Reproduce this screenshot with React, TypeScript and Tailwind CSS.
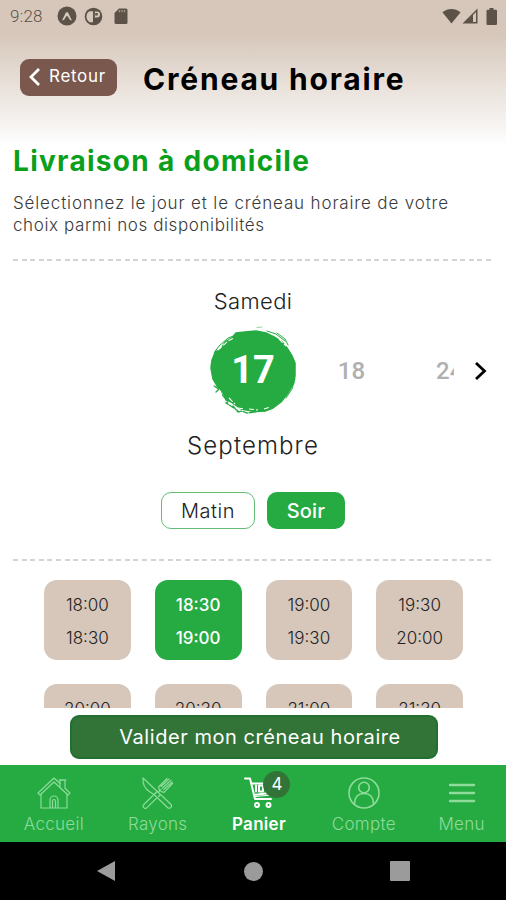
import type { ReactNode } from "react";

const slots = [
  ["18:00", "18:30"],
  ["18:30", "19:00"],
  ["19:00", "19:30"],
  ["19:30", "20:00"],
  ["20:00", "20:30"],
  ["20:30", "21:00"],
  ["21:00", "21:30"],
  ["21:30", "22:00"],
];

const StatusBar = () => (
  <div className="h-8 flex items-center justify-between pl-[10px] pr-2 text-[#5c5247]">
    <div className="flex items-center">
      <span className="w-[47px] text-[17px] leading-8 font-light tracking-[0.200px] font-['Roboto']">9:28</span>
      <svg width="20" height="20" viewBox="0 0 20 20">
        <circle cx="10" cy="10" r="9.5" fill="currentColor" />
        <path d="M5 14.2C7.200 11 8.300 6 10 6s2.800 5 5 8.200c-1.300.5-2.200-.2-3-1.700-.8-1.600-1.200-2.600-2-2.600s-1.200 1-2 2.600c-.8 1.500-1.700 2.200-3 1.700Z" fill="#d6c7ba" />
      </svg>
      <svg className="ml-[7px]" width="19" height="19" viewBox="0 0 19 19">
        <circle cx="9.500" cy="9.500" r="8.800" fill="currentColor" />
        <path d="M5.500 4.200h3.500v11H5.500a6.500 6.500 0 0 1 0-11Z" fill="#d6c7ba" />
        <path d="M10.800 4.500H13a3 3 0 0 1 0 6h-2.200Z" fill="#d6c7ba" />
        <rect x="11.200" y="6" width="2.500" height="2.500" fill="currentColor" />
      </svg>
      <svg className="ml-[10px]" width="16" height="18" viewBox="0 0 16 18">
        <path d="M6 1.500h7a1.500 1.500 0 0 1 1.500 1.500v12.500a1.500 1.500 0 0 1-1.500 1.500H3A1.500 1.500 0 0 1 1.500 15.500V6Z" fill="currentColor" />
        <path d="M6.500 3v2.200M9 3v2.200M11.500 3v2.200" stroke="#a2958a" strokeWidth="1.300" />
      </svg>
    </div>
    <div className="flex items-center">
      <svg width="19" height="16" viewBox="0 0 19 16">
        <path d="M9.500 15.500.4 4.300C5.500-.2 13.500-.2 18.600 4.300Z" fill="currentColor" />
      </svg>
      <svg className="ml-[1px]" width="17" height="16" viewBox="0 0 17 16">
        <path d="M.5 15.500 15.500.5v15Z" fill="currentColor" />
        <path d="M11 7v7h3V4Z" fill="#d6c7ba" />
      </svg>
      <svg className="ml-[7px]" width="12" height="17" viewBox="0 0 12 17">
        <path d="M3.500 0h4v1.800H10a1 1 0 0 1 1 1V16a1 1 0 0 1-1 1H1.500a1 1 0 0 1-1-1V2.800a1 1 0 0 1 1-1h2Z" fill="currentColor" />
      </svg>
    </div>
  </div>
);

const Divider = () => (
  <div className="mx-[13px] h-[2px] shrink-0 w-[478px] bg-[repeating-linear-gradient(90deg,#d6d4d2_0,#d6d4d2_5px,transparent_5px,transparent_8.600px)]" />
);

const BrushCircle = () => (
  <svg className="absolute left-0 -top-[2px]" width="88" height="90" viewBox="0 0 88 90">
    <path
      d="M2 42 3 34 7 26 12 23 16 16 23 12 27 7 36 6 47 5 57 7 65 11 73 16 78 22 83 30 86 37 86 50 84 58 79 67 72 76 64 82 56 85 43 85 32 83 25 78 17 74 14 66 8 60 4 53Z"
      fill="#25ab41"
      stroke="#25ab41"
      strokeWidth="1.500"
      strokeLinejoin="round"
    />
    <g fill="none" stroke="#25ab41" strokeLinecap="round">
      <path d="M58 5l9 3 9 7M68 7l8 6 3 6M5 27l5-7 9-8 8-3M4 31l3-7" strokeWidth="1" />
      <path d="M48 1.500l5-.5" strokeWidth="0.500" />
      <path d="M12 62l2 8 5 5M16 72l4 4-3 1 8 5 4 3M24 80l5 6 4-1 5 2 9-1M42 86l13-1 8-3M5 60l5 3-3 3" strokeWidth="1.300" strokeDasharray="5 1.500" />
      <path d="M77 72l6-9 3-10M80 65l5-8" strokeWidth="1" />
    </g>
    <path d="M9 24l10-9 6-3M70 13l7 7M19 76l6 3M20 72l6 6M29 82l6 1M40 83l9 1M55 83l6-2" fill="none" stroke="#fff" strokeWidth="1.100" strokeDasharray="5 2" />
  </svg>
);

const HomeIcon = () => (
  <svg width="34" height="32" viewBox="0 0 34 32" fill="none" stroke="currentColor" strokeWidth="1.200" strokeLinejoin="round">
    <path d="M17 1 1 16l2 2L17 5l14 13 2-2-5-4.700V3h-5v3.500Z" />
    <path d="M4 17v14h26V17M23 6v4M21.500 3h8" />
    <path d="M13 31v-8a4 4 0 0 1 8 0v8M15.500 31v-7a1.500 1.500 0 0 1 3 0v7" />
  </svg>
);

const CutleryIcon = () => (
  <svg width="33" height="32" viewBox="0 0 33 32" fill="none" stroke="currentColor" strokeWidth="1.200" strokeLinejoin="round" strokeLinecap="round">
    <path d="M2 1c-.5 6 2 11 7 14l4 2.500 13.500 13a2.300 2.300 0 0 0 3.300-3.300Z" />
    <path d="m13 17.500 3.500-3.300M17.500 19.500l1.500-1.500" />
    <path d="M12 18.500 2.800 27.500a2.200 2.200 0 0 0 3.200 3.200l9.200-9.200M18.500 13l-1-3L26 1.500M20 14.500l3 .8 8.500-8.800M20 9.500l8-7.500M21.500 11l8.500-7.700M22.800 12.500l8.400-7.500M18 14.500l2-2" />
  </svg>
);

const CartIcon = () => (
  <svg width="29" height="32" viewBox="0 0 29 32" fill="none" stroke="currentColor" strokeWidth="2" strokeLinecap="round" strokeLinejoin="round">
    <path d="M1 1.500h5L11 22h16M7.500 6.500H28l-2.500 9.500L10 18" />
    <path d="M12 8.500v6M15 8.500h4v6h-4ZM22 8.500v6" strokeWidth="2" />
    <path d="M11.500 19.500 27 18" strokeWidth="1" />
    <circle cx="13" cy="28" r="2" />
    <circle cx="24.500" cy="28" r="2" />
  </svg>
);

const AccountIcon = () => (
  <svg width="32" height="32" viewBox="0 0 32 32" fill="none" stroke="currentColor" strokeWidth="1.600">
    <circle cx="16" cy="16" r="15" />
    <circle cx="16" cy="10.500" r="5.300" />
    <path d="M6.500 27c0-6.500 3.500-10.500 9.500-10.500s9.500 4 9.500 10.500" />
  </svg>
);

const MenuIcon = () => (
  <svg width="28" height="32" viewBox="0 0 28 32" stroke="currentColor" strokeWidth="2.400" strokeLinecap="round">
    <path d="M2 8h24M2 16h24M2 24h24" />
  </svg>
);

type TabProps = { icon: ReactNode; label: string; className: string };

const Tab = ({ icon, label, className }: TabProps) => (
  <div className={`flex flex-col items-center pt-[12px] ${className}`}>
    <div className="h-8">{icon}</div>
    <span className="mt-[3px] leading-6 whitespace-nowrap">{label}</span>
  </div>
);

export default function App() {
  return (
    <main className="w-[506px] h-[900px] overflow-hidden flex flex-col bg-white font-['Inter',sans-serif] font-light text-[#222]">
      <header className="h-[145px] shrink-0 bg-[linear-gradient(180deg,#d6c7ba_0px,#d6c7ba_34px,#f7f4f2_125px,#ffffff_145px)]">
        <StatusBar />
        <div className="mt-[23px] ml-5 flex items-center">
          <button className="w-[97px] h-[37px] rounded-[9px] bg-[#7b584d] text-white flex items-center pl-2">
            <svg width="13" height="20" viewBox="0 0 13 20" fill="none" stroke="currentColor" strokeWidth="2.800">
              <path d="M11 2 3 10l8 8" />
            </svg>
            <span className="ml-2 text-[17px] font-normal tracking-[0.700px]">Retour</span>
          </button>
          <h1 className="ml-[26px] mt-1 text-[30px] leading-10 font-bold text-black tracking-[1.800px] whitespace-nowrap">Créneau horaire</h1>
        </div>
      </header>

      <section className="h-[114px] shrink-0 pl-[13px]">
        <h2 className="h-[47px] text-[28px] leading-8 font-bold text-[#0b9f1c] tracking-[1.300px] whitespace-nowrap">Livraison à domicile</h2>
        <p className="text-[17px] leading-[22px] text-[#3a3a3a] tracking-[0.850px] whitespace-nowrap">
          Sélectionnez le jour et le créneau horaire de votre
          <br />
          <span className="tracking-[0.600px]">choix parmi nos disponibilités</span>
        </p>
      </section>
      <Divider />

      <section className="h-[298px] shrink-0 pt-[24px] text-center">
        <p className="text-[22px] leading-8 tracking-[0.400px]">Samedi</p>
        <div className="mt-[11px] h-[90px] flex items-center font-['Roboto'] pl-[209px]">
          <div className="relative w-[88px] h-[90px] flex items-center justify-center">
            <BrushCircle />
            <span className="relative text-[38px] leading-10 font-bold text-white mt-[-6px]">17</span>
          </div>
          <span className="ml-[40px] w-[29px] text-[24px] leading-8 font-medium text-[#b0b0b0] mt-[-5px]">18</span>
          <span className="ml-[70px] w-[18px] overflow-hidden text-left text-[24px] leading-8 font-medium text-[#b0b0b0] mt-[-5px]">24</span>
          <svg className="ml-[20px] mt-[-5px]" width="14" height="20" viewBox="0 0 14 20" fill="none" stroke="#000" strokeWidth="2.800">
            <path d="m2 2 8.500 8L2 18" />
          </svg>
        </div>
        <p className="mt-[12px] text-[24px] leading-8 tracking-[1.100px]">Septembre</p>
        <div className="mt-[30px] flex justify-center gap-3">
          <button className="w-[94px] h-[37px] rounded-[10px] border border-[#64bd74] text-[20px] tracking-[0.500px]">Matin</button>
          <button className="w-[78px] h-[37px] rounded-[10px] bg-[#25ab41] text-white font-medium text-[20px] tracking-[0.200px]">Soir</button>
        </div>
      </section>
      <Divider />

      <section className="mt-[18px] h-[129px] shrink-0 overflow-hidden">
        <div className="ml-11 w-[419px] grid grid-cols-4 gap-x-6 gap-y-6 pt-px">
          {slots.map(([start, end]) => (
            <div
              key={start}
              className={
                start === "18:30"
                  ? "h-20 rounded-[13px] pt-[9px] text-center text-[17px] leading-[33px] bg-[#25ab41] text-white font-medium"
                  : "h-20 rounded-[13px] pt-[9px] text-center text-[17px] leading-[33px] bg-[#d6c7ba]"
              }
            >
              <p>{start}</p>
              <p>{end}</p>
            </div>
          ))}
        </div>
      </section>
      <div className="h-[57px] shrink-0 pt-[7px] pl-[70px] flex items-start">
        <button className="w-[368px] h-[44px] rounded-[9px] border-2 border-[#227030] bg-[#327438] text-white font-normal text-[20px] tracking-[0.550px] pl-3 whitespace-nowrap">
          Valider mon créneau horaire
        </button>
      </div>

      <nav className="h-[77px] shrink-0 flex bg-[#25ab41] text-[17px] text-[#8edb9b] tracking-[0.300px]">
        <Tab icon={<HomeIcon />} label="Accueil" className="w-[108px]" />
        <Tab icon={<CutleryIcon />} label="Rayons" className="w-[100px]" />
        <Tab
          icon={
            <div className="relative">
              <CartIcon />
              <span className="absolute left-[19px] -top-[6px] w-[27px] h-[27px] rounded-full bg-[#327438] text-[17px] leading-[27px] font-normal tracking-normal text-center">4</span>
            </div>
          }
          label="Panier"
          className="w-[103px] text-white font-semibold"
        />
        <Tab icon={<AccountIcon />} label="Compte" className="w-[107px]" />
        <Tab icon={<MenuIcon />} label="Menu" className="w-[89px]" />
      </nav>

      <footer className="h-[58px] shrink-0 bg-black flex items-center justify-between pl-[96px] pr-[96px] text-[#9b9b9b]">
        <svg width="20" height="22" viewBox="0 0 20 22">
          <path d="M1 11 19 1v20Z" fill="currentColor" />
        </svg>
        <span className="w-[19px] h-[19px] rounded-full bg-[#9b9b9b]" />
        <span className="w-[20px] h-[20px] rounded-[1px] bg-[#9b9b9b]" />
      </footer>
    </main>
  );
}
